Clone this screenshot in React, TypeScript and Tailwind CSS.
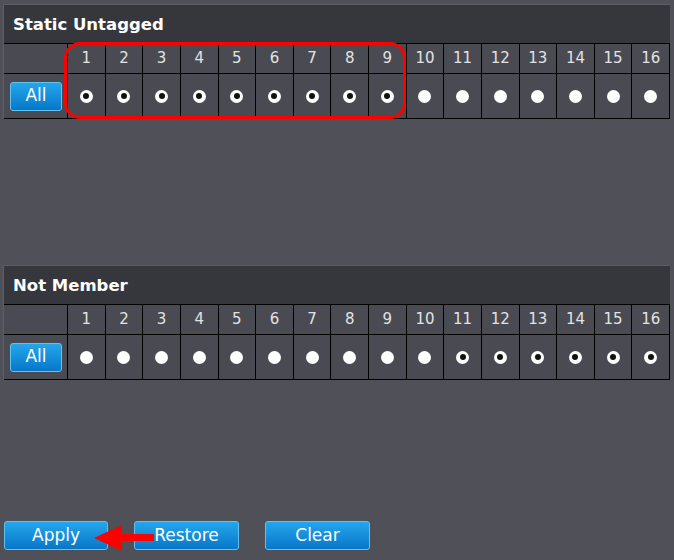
import React from 'react'

const ports = Array.from({ length: 16 }, (_, i) => i + 1)

function Radio({ checked }: { checked: boolean }) {
  return checked ? (
    <span className="block w-[13px] h-[13px] rounded-full bg-white flex items-center justify-center">
      <span className="block w-[6px] h-[6px] rounded-full bg-[#111]" />
    </span>
  ) : (
    <span className="block w-[13px] h-[13px] rounded-full bg-white" />
  )
}

function BlueButton({ label, className = '' }: { label: string; className?: string }) {
  return (
    <button
      className={`flex items-center justify-center rounded-[3px] border border-[#5fc3f3] bg-gradient-to-b from-[#25a6ec] to-[#0677c8] text-white text-[17px] ${className}`}
    >
      {label}
    </button>
  )
}

function PortPanel({ title, isChecked }: { title: string; isChecked: (p: number) => boolean }) {
  return (
    <div className="w-[667px] border-t border-l border-[#5c5d65]">
      <div className="h-[38px] bg-[#36373c] flex items-center pl-[9px] pt-[2px] text-white font-bold text-[16.5px]">
        {title}
      </div>
      <div className="grid grid-cols-[63px_repeat(16,1fr)] gap-px bg-black border-t border-r border-b border-black">
        <div className="h-[29px] bg-[#4a4b52]" />
        {ports.map((p) => (
          <div key={p} className="h-[29px] bg-[#4a4b52] flex items-center justify-center text-[15px] text-[#e2e2e2]">
            {p}
          </div>
        ))}
        <div className="h-[44px] bg-[#4a4b52] flex items-center pl-[6px]">
          <BlueButton label="All" className="w-[52px] h-[29px]" />
        </div>
        {ports.map((p) => (
          <div key={p} className="h-[44px] bg-[#4a4b52] flex items-center justify-center">
            <Radio checked={isChecked(p)} />
          </div>
        ))}
      </div>
    </div>
  )
}

export default function App() {
  return (
    <div
      className="relative w-[674px] h-[560px] bg-[#4f5058] pl-[3px] pt-[4px] overflow-hidden"
      style={{ fontFamily: '"DejaVu Sans", Verdana, sans-serif' }}
    >
      <PortPanel title="Static Untagged" isChecked={(p) => p <= 9} />
      <div className="h-[146px]" />
      <PortPanel title="Not Member" isChecked={(p) => p >= 11} />

      <div className="flex gap-[26px] mt-[141px] pl-[1px]">
        <BlueButton label="Apply" className="w-[104px] h-[29px]" />
        <BlueButton label="Restore" className="w-[105px] h-[29px]" />
        <BlueButton label="Clear" className="w-[105px] h-[29px]" />
      </div>

      {/* annotations */}
      <div className="absolute left-[64px] top-[42px] w-[342px] h-[77px] rounded-[16px] border-[3px] border-[#ff0000]" />
      <svg className="absolute left-[93px] top-[524px]" width="62" height="28" viewBox="0 0 62 28">
        <polygon points="1,14 29,1 29,10 61,10 61,17 29,17 29,27" fill="#ff0000" />
      </svg>
    </div>
  )
}
